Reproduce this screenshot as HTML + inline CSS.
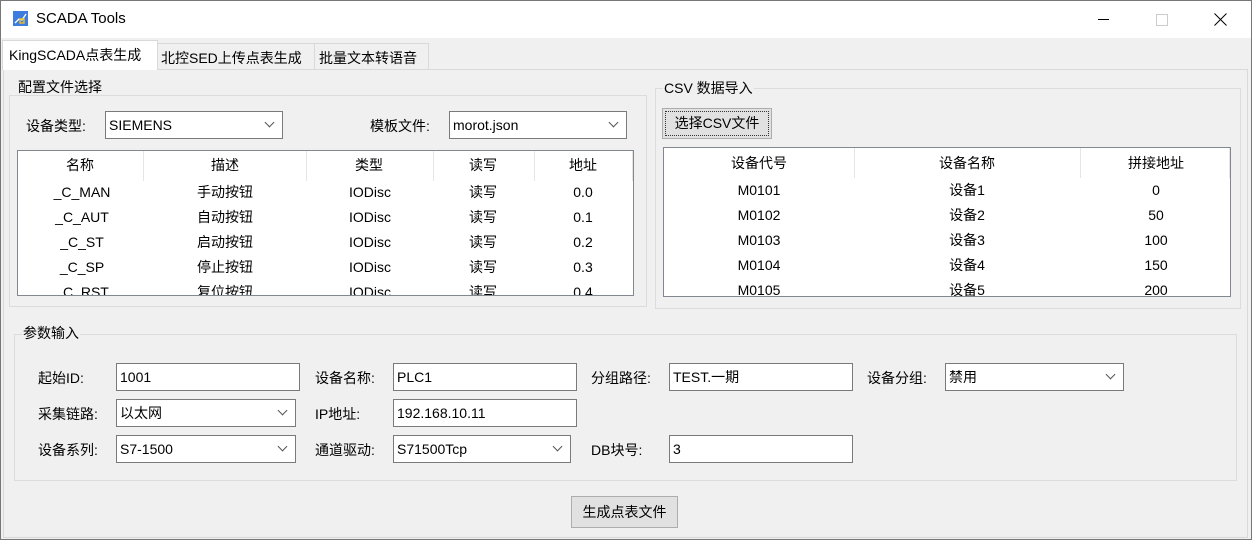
<!DOCTYPE html>
<html><head><meta charset="utf-8"><style>
*{box-sizing:border-box;margin:0;padding:0}
body{width:1252px;height:540px;background:#f0f0f0;font-family:"Liberation Sans","Microsoft YaHei","Noto Sans CJK SC",sans-serif;font-size:14px;color:#000;position:relative;overflow:hidden}
.a{position:absolute}
.win{left:0;top:0;width:1252px;height:540px;border:1px solid #777}
.grp{border:1px solid #dcdcdc}
.gt{background:#f0f0f0;padding:0 1px;line-height:16px}
.box{background:#fff;border:1px solid #7a7a7a;line-height:24px;padding-left:3px;white-space:nowrap;overflow:hidden}
.sel::after{content:"";position:absolute;right:9px;top:7px;width:6px;height:6px;border-right:1px solid #555;border-bottom:1px solid #555;transform:rotate(45deg)}
.tbl{background:#fff;border:1px solid #828790;overflow:hidden}
.c{position:absolute;text-align:center;line-height:20px;white-space:nowrap}
.hs{position:absolute;top:0;width:1px;height:30px;background:#e5e5e5}
.btn{background:#e1e1e1;border:1px solid #adadad;text-align:center}
</style></head><body>
<div class="a win"></div>
<div class="a" style="left:1px;top:1px;width:1250px;height:37px;background:#fff"></div>
<svg class="a" style="left:13px;top:11px" width="15" height="15"><rect width="15" height="15" fill="#3d7de0"/><path d="M2 12 L6 8 L9 9 L13 3" stroke="#fff" stroke-width="1.3" fill="none"/><rect x="7" y="8" width="4" height="4" fill="none" stroke="#f0c020" stroke-width="1.4"/></svg>
<div class="a" style="left:36px;top:10px;font-size:15px">SCADA Tools</div>
<div class="a" style="left:1098px;top:19px;width:11px;height:1px;background:#000"></div>
<div class="a" style="left:1156px;top:14px;width:12px;height:12px;border:1px solid #ccc"></div>
<svg class="a" style="left:1214px;top:13px" width="13" height="13"><path d="M0.5 0.5L12.5 12.5M12.5 0.5L0.5 12.5" stroke="#000" stroke-width="1"/></svg>
<!-- tabs -->
<div class="a" style="left:3px;top:69px;width:1245px;height:469px;border:1px solid #d9d9d9;background:#f0f0f0"></div>
<div class="a" style="left:157px;top:43px;width:158px;height:27px;border:1px solid #d9d9d9;background:#f0f0f0"></div>
<div class="a" style="left:314px;top:43px;width:115px;height:27px;border:1px solid #d9d9d9;background:#f0f0f0"></div>
<div class="a" style="left:2px;top:40px;width:156px;height:30px;background:#fff;border:1px solid #d9d9d9;border-bottom:none"></div>
<div class="a" style="left:9px;top:45px">KingSCADA点表生成</div>
<div class="a" style="left:161px;top:48px">北控SED上传点表生成</div>
<div class="a" style="left:319px;top:48px">批量文本转语音</div>
<!-- left group -->
<div class="a grp" style="left:9px;top:95px;width:638px;height:212px"></div>
<div class="a gt" style="left:17px;top:79px">配置文件选择</div>
<div class="a" style="left:26px;top:116px">设备类型:</div>
<div class="a box sel" style="left:105px;top:111px;width:178px;height:28px;line-height:26px">SIEMENS</div>
<div class="a" style="left:370px;top:116px">模板文件:</div>
<div class="a box sel" style="left:449px;top:111px;width:178px;height:28px;line-height:26px">morot.json</div>
<div class="a tbl" style="left:17px;top:150px;width:617px;height:146px">
<div class="hs" style="left:125px"></div><div class="hs" style="left:288px"></div><div class="hs" style="left:415px"></div><div class="hs" style="left:516px"></div><div class="hs" style="left:614px"></div>
</div>
<div class="a" style="left:17px;top:150px;width:617px;height:146px;overflow:hidden">
<div class="c" style="left:13px;width:100px;top:5px">名称</div><div class="c" style="left:158px;width:100px;top:5px">描述</div><div class="c" style="left:302px;width:100px;top:5px">类型</div><div class="c" style="left:416px;width:100px;top:5px">读写</div><div class="c" style="left:516px;width:100px;top:5px">地址</div>
<div class="c" style="left:15px;width:100px;top:32px">_C_MAN</div><div class="c" style="left:158px;width:100px;top:32px">手动按钮</div><div class="c" style="left:303px;width:100px;top:32px">IODisc</div><div class="c" style="left:416px;width:100px;top:32px">读写</div><div class="c" style="left:516px;width:100px;top:32px">0.0</div>
<div class="c" style="left:15px;width:100px;top:57px">_C_AUT</div><div class="c" style="left:158px;width:100px;top:57px">自动按钮</div><div class="c" style="left:303px;width:100px;top:57px">IODisc</div><div class="c" style="left:416px;width:100px;top:57px">读写</div><div class="c" style="left:516px;width:100px;top:57px">0.1</div>
<div class="c" style="left:15px;width:100px;top:82px">_C_ST</div><div class="c" style="left:158px;width:100px;top:82px">启动按钮</div><div class="c" style="left:303px;width:100px;top:82px">IODisc</div><div class="c" style="left:416px;width:100px;top:82px">读写</div><div class="c" style="left:516px;width:100px;top:82px">0.2</div>
<div class="c" style="left:15px;width:100px;top:107px">_C_SP</div><div class="c" style="left:158px;width:100px;top:107px">停止按钮</div><div class="c" style="left:303px;width:100px;top:107px">IODisc</div><div class="c" style="left:416px;width:100px;top:107px">读写</div><div class="c" style="left:516px;width:100px;top:107px">0.3</div>
<div class="c" style="left:15px;width:100px;top:132px">_C_RST</div><div class="c" style="left:158px;width:100px;top:132px">复位按钮</div><div class="c" style="left:303px;width:100px;top:132px">IODisc</div><div class="c" style="left:416px;width:100px;top:132px">读写</div><div class="c" style="left:516px;width:100px;top:132px">0.4</div>
<div class="a" style="left:0;top:144px;width:617px;height:2px;border-bottom:1px solid #828790"></div>
</div>
<!-- right group -->
<div class="a grp" style="left:655px;top:88px;width:586px;height:221px"></div>
<div class="a gt" style="left:663px;top:80px">CSV 数据导入</div>
<div class="a btn" style="left:662px;top:108px;width:110px;height:31px;line-height:29px;outline:1px dotted #333;outline-offset:-4px">选择CSV文件</div>
<div class="a tbl" style="left:663px;top:147px;width:568px;height:150px">
<div class="hs" style="left:190px"></div><div class="hs" style="left:416px"></div><div class="hs" style="left:565px"></div>
<div class="c" style="left:0;width:190px;top:5px">设备代号</div><div class="c" style="left:190px;width:226px;top:5px">设备名称</div><div class="c" style="left:416px;width:152px;top:5px">拼接地址</div>
<div class="c" style="left:0;width:190px;top:32px">M0101</div><div class="c" style="left:190px;width:226px;top:32px">设备1</div><div class="c" style="left:416px;width:152px;top:32px">0</div>
<div class="c" style="left:0;width:190px;top:57px">M0102</div><div class="c" style="left:190px;width:226px;top:57px">设备2</div><div class="c" style="left:416px;width:152px;top:57px">50</div>
<div class="c" style="left:0;width:190px;top:82px">M0103</div><div class="c" style="left:190px;width:226px;top:82px">设备3</div><div class="c" style="left:416px;width:152px;top:82px">100</div>
<div class="c" style="left:0;width:190px;top:107px">M0104</div><div class="c" style="left:190px;width:226px;top:107px">设备4</div><div class="c" style="left:416px;width:152px;top:107px">150</div>
<div class="c" style="left:0;width:190px;top:132px">M0105</div><div class="c" style="left:190px;width:226px;top:132px">设备5</div><div class="c" style="left:416px;width:152px;top:132px">200</div>
</div>
<!-- params -->
<div class="a grp" style="left:14px;top:334px;width:1223px;height:147px"></div>
<div class="a gt" style="left:22px;top:325px">参数输入</div>
<div class="a" style="left:38px;top:368px">起始ID:</div>
<div class="a box" style="left:116px;top:363px;width:184px;height:28px;line-height:26px">1001</div>
<div class="a" style="left:315px;top:368px">设备名称:</div>
<div class="a box" style="left:393px;top:363px;width:184px;height:28px;line-height:26px">PLC1</div>
<div class="a" style="left:591px;top:368px">分组路径:</div>
<div class="a box" style="left:669px;top:363px;width:184px;height:28px;line-height:26px">TEST.一期</div>
<div class="a" style="left:867px;top:368px">设备分组:</div>
<div class="a box sel" style="left:945px;top:363px;width:179px;height:28px;line-height:26px">禁用</div>
<div class="a" style="left:38px;top:404px">采集链路:</div>
<div class="a box sel" style="left:116px;top:399px;width:180px;height:28px;line-height:26px">以太网</div>
<div class="a" style="left:315px;top:404px">IP地址:</div>
<div class="a box" style="left:393px;top:399px;width:184px;height:28px;line-height:26px">192.168.10.11</div>
<div class="a" style="left:38px;top:440px">设备系列:</div>
<div class="a box sel" style="left:116px;top:435px;width:180px;height:28px;line-height:26px">S7-1500</div>
<div class="a" style="left:315px;top:440px">通道驱动:</div>
<div class="a box sel" style="left:393px;top:435px;width:178px;height:28px;line-height:26px">S71500Tcp</div>
<div class="a" style="left:591px;top:440px">DB块号:</div>
<div class="a box" style="left:669px;top:435px;width:184px;height:28px;line-height:26px">3</div>
<div class="a btn" style="left:571px;top:496px;width:107px;height:32px;line-height:30px">生成点表文件</div>
</body></html>
